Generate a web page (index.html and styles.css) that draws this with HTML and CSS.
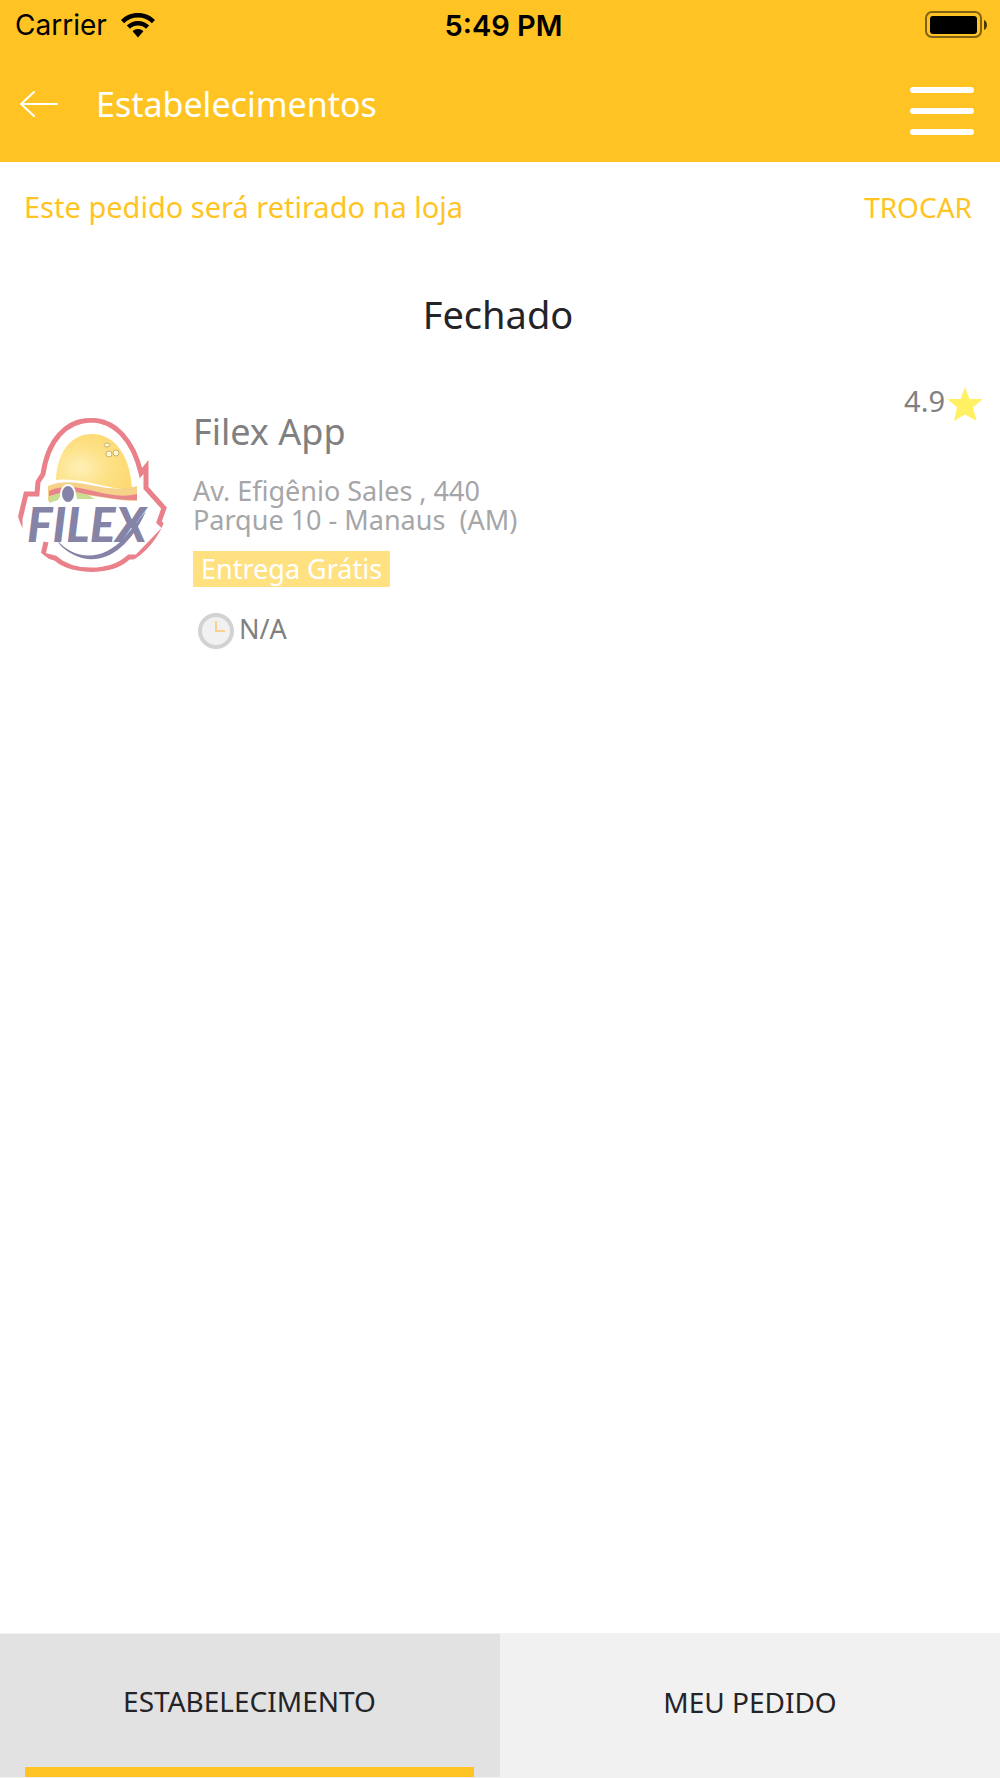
FILE: index.html
```html
<!DOCTYPE html>
<html lang="pt-BR">
<head>
<meta charset="utf-8">
<meta name="viewport" content="width=device-width, initial-scale=1">
<title>Estabelecimentos</title>
<link rel="stylesheet" href="styles.css">
</head>
<body>
<header class="header">
  <div class="status">
    <div class="carrier">
      <span>Carrier</span>
      <svg width="34" height="25" viewBox="0 0 34 25" aria-hidden="true">
        <path d="M17 0C10.300 0 4.400 2.600 0 7l3.100 3.200C6.700 6.600 11.600 4.600 17 4.600s10.300 2 13.900 5.600L34 7C29.600 2.600 23.700 0 17 0z"/>
        <path d="M17 8c-4.400 0-8.300 1.700-11.200 4.600L9 15.800c2.100-2 4.900-3.200 8-3.200s5.900 1.200 8 3.200l3.200-3.200C25.300 9.700 21.400 8 17 8z"/>
        <path d="M17 16c-2.100 0-4 .8-5.400 2.200L17 24.500l5.400-6.300C21 16.800 19.100 16 17 16z"/>
      </svg>
    </div>
    <time class="clock">5:49 PM</time>
    <svg class="battery" width="64" height="28" viewBox="0 0 64 28" aria-hidden="true">
      <rect x="2" y="1" width="55" height="25" rx="6" fill="none" stroke="#806212" stroke-width="2"/>
      <rect x="6" y="5" width="47" height="18" rx="3"/>
      <path d="M60 9c4 1.500 4 8.500 0 10z" fill="#4c3a0b"/>
    </svg>
  </div>
  <div class="nav">
    <button class="icon-button" type="button" aria-label="Voltar">
      <svg width="38" height="28" viewBox="0 0 38 28" fill="none" stroke="#fff" stroke-width="2">
        <path d="M37 14H1M14 2L1 14l13 12" stroke-linecap="round" stroke-linejoin="round"/>
      </svg>
    </button>
    <h1 class="title">Estabelecimentos</h1>
    <button class="icon-button menu" type="button" aria-label="Menu">
      <svg width="64" height="48" viewBox="0 0 64 48" stroke="#fff" stroke-width="6" stroke-linecap="round">
        <path d="M3 3h58M3 24h58M3 45h58"/>
      </svg>
    </button>
  </div>
</header>
<main class="main">
  <div class="pickup">
    <span class="notice">Este pedido será retirado na loja</span>
    <button class="swap" type="button">TROCAR</button>
  </div>
  <h2 class="section">Fechado</h2>
  <article class="store">
    <svg class="logo" width="150" height="158" viewBox="17 416 150 158" role="img" aria-label="Filex">
      <defs>
        <radialGradient id="bun" cx=".32" cy=".6" r=".7">
          <stop offset="0" stop-color="#fff0b8"/>
          <stop offset=".5" stop-color="#fde289"/>
          <stop offset="1" stop-color="#fdd971"/>
        </radialGradient>
        <clipPath id="round"><circle cx="92" cy="495" r="77"/></clipPath>
      </defs>
      <g clip-path="url(#round)">
        <path d="M20 545L20 519L26 494H37L38 482L43 474C48 440 66 421 90 420C115 420 133 440 141 473L146 467V488L164 508L159 522L165 528L137 557H129C117 568 103 570 91 570C78 570 64 566 55 558L43 555L46 542" fill="none" stroke="#e9808a" stroke-width="5"/>
        <path d="M56 480C57 452 71 434 92 434C116 434 131 458 132 490C105 489 82 477 56 480z" fill="url(#bun)"/>
        <path d="M48 501V486C77 474 105 496 137 486V501C103 501 77 487 48 501z" fill="#f6d18a"/>
        <path d="M49 491C77 478 105 502 137 494V500C103 501 77 487 49 496z" fill="#e7858a"/>
        <path d="M49 497Q57 493 62 493L58 500L49 503zM76 492Q88 494 95 499L77 499z" fill="#c9dd91"/>
      </g>
      <g fill="#fff6d5" stroke="#c9b46d">
        <ellipse cx="107" cy="445" rx="3" ry="2"/>
        <ellipse cx="109" cy="454" rx="3" ry="3"/>
        <ellipse cx="116" cy="453" rx="3" ry="3"/>
      </g>
      <ellipse cx="68" cy="494" rx="7" ry="9" fill="#8584a6" stroke="#fff" stroke-width="2"/>
      <text class="logo-text" x="27" y="542">FILEX</text>
      <path d="M57 540C74 560 102 562 124 538L146 511C129 549 105 564 82 558C70 554 61 548 57 540z" fill="#8584a6"/>
    </svg>
    <div class="info">
      <h3 class="name">Filex App</h3>
      <p class="address">Av. Efigênio Sales , 440<br>Parque 10 - Manaus&nbsp; (AM)</p>
      <span class="tag">Entrega Grátis</span>
      <div class="time">
        <svg width="36" height="36" viewBox="0 0 36 36" aria-hidden="true">
          <circle cx="18" cy="18" r="16" fill="#f1f1f1" stroke="#d2d2d2" stroke-width="4"/>
          <path d="M18 8v10h9" fill="none" stroke="#fbd28c" stroke-width="2"/>
        </svg>
        <span class="time-text">N/A</span>
      </div>
    </div>
    <div class="rating">
      <span>4.9</span>
      <svg class="star" width="36" height="36" viewBox="0 0 36 36" aria-hidden="true">
        <path d="M18 1l4.500 12H36L26 21.200 29.500 35 18 28.500 7 35l3-13.800L0 13h13.500z" fill="#fff064"/>
      </svg>
    </div>
  </article>
</main>
<nav class="tabs">
  <button class="tab active" type="button">ESTABELECIMENTO</button>
  <button class="tab" type="button">MEU PEDIDO</button>
</nav>
</body>
</html>
```
FILE: styles.css
```css
* { box-sizing: border-box; }

body {
  margin: 0;
  min-height: 100vh;
  display: flex;
  flex-direction: column;
  background: #fff;
  color: #242428;
  font-family: "Noto Sans", "Open Sans", sans-serif;
  font-size: 27px;
}

h1, h2, h3, p { margin: 0; font-weight: 400; }

button {
  padding: 0;
  border: 0;
  background: none;
  color: inherit;
  font: inherit;
  cursor: pointer;
}

svg { display: block; flex: none; }

.header { background: #ffc423; }

.status {
  display: grid;
  grid-template-columns: 1fr auto 1fr;
  align-items: center;
  height: 50px;
  padding: 0 12px 0 15px;
  color: #000;
  font-family: Inter, sans-serif;
  font-size: 28px;
}

.carrier { display: flex; align-items: center; gap: 14px; }
.clock { padding-left: 4px; font-size: 29px; font-weight: 600; }
.battery { justify-self: end; }

.nav {
  display: flex;
  align-items: center;
  height: 112px;
  padding: 0 26px 4px 20px;
}

.title {
  flex: 1;
  margin-left: 38px;
  color: #fff;
  font-size: 34px;
  line-height: 48px;
}

.menu { margin-top: 14px; }

.main { flex: 1; }

.pickup {
  display: flex;
  justify-content: space-between;
  padding: 25px 28px 0 24px;
  color: #ffc423;
  line-height: 40px;
}

.notice { font-size: 29px; }
.swap { font-size: 28px; }

.section {
  margin-top: 59px;
  padding-right: 4px;
  font-size: 38px;
  line-height: 56px;
  text-align: center;
}

.store {
  display: flex;
  align-items: flex-start;
  padding: 38px 17px 0;
  color: #808082;
}

.logo { margin-top: 36px; }

.logo-text {
  fill: #8584a6;
  font-family: Lato, sans-serif;
  font-size: 48px;
  font-style: italic;
  font-weight: 900;
}

.info { flex: 1; padding: 28px 0 0 26px; }

.name { font-size: 36px; line-height: 48px; }

.address {
  margin-top: 20px;
  color: #a6a6a8;
  line-height: 29px;
}

.tag {
  display: inline-block;
  margin-top: 17px;
  padding: 0 8px;
  background: #ffe182;
  color: #fff;
  line-height: 36px;
}

.time {
  display: flex;
  align-items: flex-start;
  gap: 5px;
  margin-top: 26px;
  padding-left: 5px;
}

.time-text { line-height: 32px; }

.rating {
  display: flex;
  align-items: center;
  gap: 2px;
  font-size: 29px;
  line-height: 36px;
}

.star { margin-top: 6px; }

.tabs {
  display: grid;
  grid-template-columns: 1fr 1fr;
  height: 145px;
  padding: 1px 0;
  background: #f1f1f1;
  font-size: 28px;
}

.tab { padding-bottom: 8px; }

.active {
  display: grid;
  grid-template-rows: 1fr 10px;
  place-items: center;
  padding: 0 26px 0 25px;
  background: #e2e2e2;
}

.active::after {
  content: "";
  width: 100%;
  height: 10px;
  background: #ffc423;
}
```
